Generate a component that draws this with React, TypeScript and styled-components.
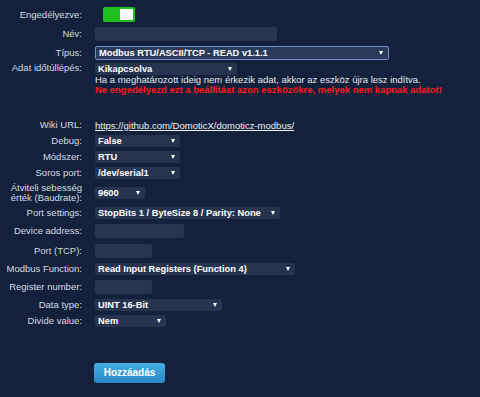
import React from 'react'
import styled, { createGlobalStyle } from 'styled-components'

const GlobalStyle = createGlobalStyle`
  html, body {
    margin: 0;
    padding: 0;
    background: #13213c;
  }
  body {
    font-family: "Liberation Sans", Arial, sans-serif;
    color: #dfe3ea;
  }
`

const Page = styled.div`
  width: 480px;
  height: 397px;
  background: #13213c;
  padding-top: 5px;
  box-sizing: border-box;
`

const Row = styled.div<{ $h: number; $top?: boolean }>`
  display: flex;
  align-items: ${p => (p.$top ? 'flex-start' : 'center')};
  height: ${p => p.$h}px;
  padding-top: ${p => (p.$top ? 2 : 0)}px;
  box-sizing: border-box;
`

const Label = styled.div`
  width: 82px;
  flex-shrink: 0;
  text-align: right;
  font-size: 9.5px;
  line-height: 10px;
  color: #d6dbe3;
`

const Field = styled.div`
  margin-left: 13px;
  display: flex;
  flex-direction: column;
`

const Switch = styled.div`
  width: 32px;
  height: 15px;
  margin-left: 8px;
  background: #1fbf1f;
  border-radius: 2px;
  display: flex;
  align-items: center;
  justify-content: flex-end;
  padding-right: 2px;
  box-sizing: border-box;
`

const Knob = styled.div`
  width: 13px;
  height: 11px;
  background: #ffffff;
  border-radius: 1px;
`

const TextInput = styled.div<{ $w: number }>`
  width: ${p => p.$w}px;
  height: 14px;
  background: #28354f;
  border-radius: 2px;
`

const Select = styled.div<{ $w: number; $focus?: boolean }>`
  width: ${p => p.$w}px;
  height: ${p => (p.$focus ? 14 : 12)}px;
  box-sizing: border-box;
  background: ${p => (p.$focus ? '#2a3a5a' : '#26344f')};
  border: ${p => (p.$focus ? '1px solid #6f8fc6' : 'none')};
  border-radius: 2px;
  display: flex;
  align-items: center;
  justify-content: space-between;
  padding: 0 5px 0 3px;
  font-size: 9.3px;
  font-weight: bold;
  color: #ffffff;
  white-space: nowrap;
`

const Arrow = styled.span`
  width: 0;
  height: 0;
  border-left: 2.5px solid transparent;
  border-right: 2.5px solid transparent;
  border-top: 4px solid #ffffff;
`

const Help = styled.div<{ $warn?: boolean }>`
  font-size: 9.5px;
  line-height: 10px;
  white-space: nowrap;
  color: ${p => (p.$warn ? '#ff1a1a' : '#e4e7ee')};
  font-weight: ${p => (p.$warn ? 'bold' : 'normal')};
`

const Link = styled.a`
  font-size: 9.5px;
  color: #eef1f6;
  text-decoration: underline;
`

const Spacer = styled.div<{ $h: number }>`
  height: ${p => p.$h}px;
`

const ButtonRow = styled.div`
  padding-left: 94px;
`

const AddButton = styled.button`
  width: 71px;
  height: 20px;
  border: none;
  border-radius: 3px;
  background: linear-gradient(to bottom, #45ade4, #2b86c8);
  color: #ffffff;
  font-family: "Liberation Sans", Arial, sans-serif;
  font-size: 10px;
  font-weight: bold;
  padding: 0;
`

type SelectProps = { w: number; value: string; focus?: boolean }

function Drop({ w, value, focus }: SelectProps) {
  return (
    <Select $w={w} $focus={focus}>
      <span>{value}</span>
      <Arrow />
    </Select>
  )
}

export default function App() {
  return (
    <Page>
      <GlobalStyle />
      <Row $h={19}>
        <Label>Engedélyezve:</Label>
        <Field>
          <Switch>
            <Knob />
          </Switch>
        </Field>
      </Row>
      <Row $h={20}>
        <Label>Név:</Label>
        <Field><TextInput $w={182} /></Field>
      </Row>
      <Row $h={17}>
        <Label>Típus:</Label>
        <Field><Drop w={294} value="Modbus RTU/ASCII/TCP - READ v1.1.1" focus /></Field>
      </Row>
      <Row $h={36} $top>
        <Label>Adat időtúllépés:</Label>
        <Field>
          <Drop w={142} value="Kikapcsolva" />
          <Help>Ha a meghatározott ideig nem érkezik adat, akkor az eszköz újra lesz indítva.</Help>
          <Help $warn>Ne engedélyezd ezt a beállítást azon eszközökre, melyek nem kapnak adatot!</Help>
        </Field>
      </Row>
      <Spacer $h={20} />
      <Row $h={16}>
        <Label>Wiki URL:</Label>
        <Field><Link href="#">https://github.com/DomoticX/domoticz-modbus/</Link></Field>
      </Row>
      <Row $h={16}>
        <Label>Debug:</Label>
        <Field><Drop w={85} value="False" /></Field>
      </Row>
      <Row $h={16}>
        <Label>Módszer:</Label>
        <Field><Drop w={85} value="RTU" /></Field>
      </Row>
      <Row $h={16}>
        <Label>Soros port:</Label>
        <Field><Drop w={85} value="/dev/serial1" /></Field>
      </Row>
      <Row $h={24}>
        <Label>Átviteli sebesség érték (Baudrate):</Label>
        <Field><Drop w={50} value="9600" /></Field>
      </Row>
      <Row $h={16}>
        <Label>Port settings:</Label>
        <Field><Drop w={185} value="StopBits 1 / ByteSize 8 / Parity: None" /></Field>
      </Row>
      <Row $h={20}>
        <Label>Device address:</Label>
        <Field><TextInput $w={89} /></Field>
      </Row>
      <Row $h={20}>
        <Label>Port (TCP):</Label>
        <Field><TextInput $w={57} /></Field>
      </Row>
      <Row $h={16}>
        <Label>Modbus Function:</Label>
        <Field><Drop w={200} value="Read Input Registers (Function 4)" /></Field>
      </Row>
      <Row $h={19}>
        <Label>Register number:</Label>
        <Field><TextInput $w={57} /></Field>
      </Row>
      <Row $h={17}>
        <Label>Data type:</Label>
        <Field><Drop w={127} value="UINT 16-Bit" /></Field>
      </Row>
      <Row $h={16}>
        <Label>Divide value:</Label>
        <Field><Drop w={71} value="Nem" /></Field>
      </Row>
      <Spacer $h={33} />
      <ButtonRow>
        <AddButton>Hozzáadás</AddButton>
      </ButtonRow>
    </Page>
  )
}
